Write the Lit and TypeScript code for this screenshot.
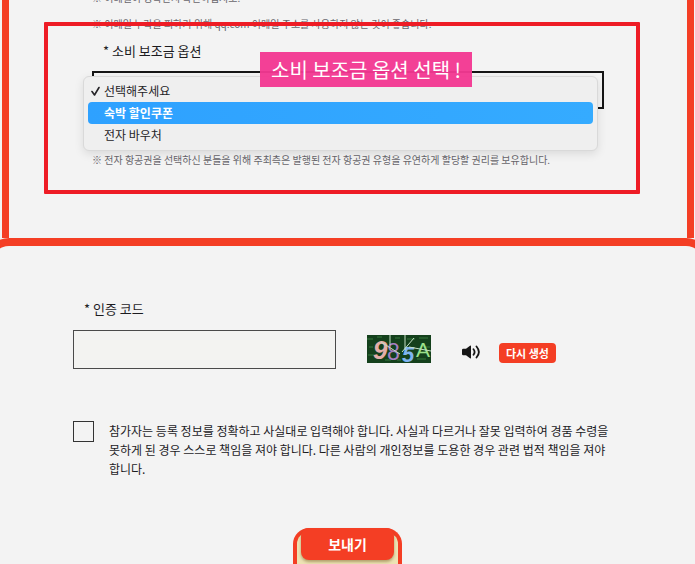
import { LitElement, html, css } from "lit";
import { customElement, state } from "lit/decorators.js";

const OPTIONS = ["선택해주세요", "숙박 할인쿠폰", "전자 바우처"];

@customElement("option-picker")
export class OptionPicker extends LitElement {
  @state() private selected = 0;
  @state() private active = 1;

  static styles = css`
    :host {
      display: block;
      position: relative;
    }
    .field {
      display: block;
      width: 100%;
      height: 38px;
      padding: 0 12px;
      border: 2px solid #151515;
      border-radius: 0;
      background: #f3f3f3;
      appearance: none;
      color: transparent;
      font: inherit;
      outline: none;
    }
    .popup {
      position: absolute;
      top: 5px;
      left: -9px;
      right: 6px;
      box-sizing: border-box;
      padding: 3px 4px 4px;
      border: 1px solid #d9d9d9;
      border-radius: 6px;
      background: #efefef;
      box-shadow: 0 3px 10px rgba(0, 0, 0, 0.1);
    }
    .option {
      display: flex;
      align-items: center;
      width: 100%;
      height: 22px;
      padding: 0 2px 2px;
      border: 0;
      border-radius: 4px;
      background: none;
      color: #252327;
      font: inherit;
      font-size: 12px;
      text-align: left;
    }
    .mark {
      flex: none;
      width: 14px;
      height: 12px;
    }
    .active {
      background: linear-gradient(90deg, #2ea1ff, #35abff);
      color: #fff;
      font-weight: 700;
    }
  `;

  render() {
    return html`
      <select class="field" id="subsidy" aria-label="소비 보조금 옵션">
        ${OPTIONS.map(
          (o, i) => html`<option ?selected=${i === this.selected}>${o}</option>`
        )}
      </select>
      <div class="popup" role="listbox" aria-label="소비 보조금 옵션">
        ${OPTIONS.map(
          (o, i) => html`
            <button
              type="button"
              role="option"
              aria-selected=${i === this.selected}
              class="option ${i === this.active ? "active" : ""}"
              @mouseenter=${() => (this.active = i)}
              @click=${() => (this.selected = i)}
            >
              <svg class="mark" viewBox="0 0 14 12" aria-hidden="true">
                ${i === this.selected
                  ? html`<svg>
                      <path
                        d="M2 7.5 L4.5 11 L9 3.5"
                        fill="none"
                        stroke="#252327"
                        stroke-width="1.6"
                        stroke-linecap="round"
                        stroke-linejoin="round"
                      />
                    </svg>`
                  : ""}
              </svg>
              ${o}
            </button>
          `
        )}
      </div>
    `;
  }
}

@customElement("app-root")
export class AppRoot extends LitElement {
  static styles = css`
    :host {
      display: block;
      min-height: 100vh;
      overflow: hidden;
      background: #f3f3f3;
      color: #1c1b1f;
      font-family: "Noto Sans CJK KR", "Noto Sans", sans-serif;
      font-size: 13px;
    }
    * {
      box-sizing: border-box;
    }
    p {
      margin: 0;
    }
    .card-top {
      margin: -15px 1px 0 2px;
      padding: 0 83px 65px;
      border: solid #f43e24;
      border-width: 0 7px;
    }
    .note {
      color: #68666c;
      font-size: 10px;
      line-height: 26px;
      white-space: nowrap;
    }
    .subsidy {
      position: relative;
      padding-top: 4px;
    }
    .label {
      display: block;
      padding-left: 11px;
      line-height: 20px;
    }
    .picker {
      margin: 10px 0 38px;
    }
    .outline {
      position: absolute;
      inset: -15px -36px -21px -48px;
      border: 4px solid #ee1c25;
      border-radius: 1px;
      pointer-events: none;
    }
    .tag {
      position: absolute;
      top: 15px;
      left: 168px;
      width: 212px;
      height: 35px;
      background: rgba(242, 56, 146, 0.96);
      color: #fff;
      font-size: 20px;
      line-height: 35px;
      text-align: center;
      white-space: nowrap;
    }
    .card-bottom {
      margin: 0 -16px;
      padding: 53px 81px 0;
      border: 8px solid #f43e24;
      border-bottom: 0;
      border-radius: 25px 25px 0 0;
      background: #f3f3f3;
    }
    .code-row {
      display: flex;
      align-items: center;
      margin-top: 11px;
    }
    .code {
      width: 263px;
      height: 39px;
      padding: 0 10px;
      border: 1px solid #4a4a4a;
      border-radius: 0;
      background: #f3f3f1;
      font: inherit;
      outline: none;
    }
    .captcha {
      flex: none;
      width: 64px;
      height: 28px;
      margin: 0 0 2px 31px;
    }
    .sound {
      flex: none;
      width: 20px;
      height: 16px;
      margin: 4px 0 0 31px;
      padding: 0;
      border: 0;
      background: none;
    }
    .sound svg {
      display: block;
    }
    .renew {
      flex: none;
      width: 57px;
      height: 20px;
      margin: 6px 0 0 17px;
      padding: 0;
      border: 0;
      border-radius: 4px;
      background: #f43e24;
      color: #fff;
      font: inherit;
      font-size: 11px;
      font-weight: 700;
      line-height: 20px;
    }
    .agree {
      display: flex;
      gap: 15px;
      margin-top: 52px;
      padding-right: 12px;
      font-size: 12px;
      line-height: 19px;
    }
    .tick {
      flex: none;
      width: 21px;
      height: 21px;
      margin: 0;
      border: 1px solid #333;
      background: #f3f3f3;
      appearance: none;
    }
    .send-frame {
      width: 109px;
      height: 60px;
      margin: 50px auto 0;
      border: 4px solid #f43e24;
      border-bottom: 0;
      border-radius: 16px 16px 0 0;
      background: #ede3b4;
    }
    .send {
      display: block;
      width: 93px;
      height: 32px;
      margin: -4px auto 0;
      padding: 0;
      border: 0;
      border-radius: 8px;
      background: #f43e24;
      box-shadow: 0 2px 3px rgba(90, 60, 0, 0.4);
      color: #fff;
      font: inherit;
      font-size: 14px;
      font-weight: 700;
      line-height: 32px;
    }
  `;

  render() {
    return html`
      <section class="card-top">
        <p class="note">※ 이메일이 정확한지 확인하십시오.</p>
        <p class="note">
          ※ 이메일 누락을 피하기 위해 qq.com 이메일 주소를 사용하지 않는 것이
          좋습니다.
        </p>
        <div class="subsidy">
          <span class="label">* 소비 보조금 옵션</span>
          <option-picker class="picker"></option-picker>
          <p class="note">
            ※ 전자 항공권을 선택하신 분들을 위해 주최측은 발행된 전자 항공권
            유형을 유연하게 할당할 권리를 보유합니다.
          </p>
          <div class="outline"></div>
          <div class="tag">소비 보조금 옵션 선택 !</div>
        </div>
      </section>

      <section class="card-bottom">
        <label class="label" for="code">* 인증 코드</label>
        <div class="code-row">
          <input class="code" id="code" type="text" />
          <svg class="captcha" viewBox="0 0 64 28" role="img" aria-label="captcha">
            <rect width="64" height="28" fill="#14401c" />
            <path
              d="M0 4h6M10 2h5M2 12h4M1 20h6M18 25h6M28 3h5M40 4h8M52 3h9M58 12h5M50 24h9M30 25h4"
              stroke="#255c2c"
              stroke-width="2"
            />
            <g font-family="Liberation Sans, sans-serif">
              <text x="6" y="24" font-size="26" font-weight="700" font-style="italic" fill="#e3aea9">9</text>
              <text x="20" y="25" font-size="23" fill="#a77fc0">8</text>
              <text x="35" y="27" font-size="22" font-weight="700" font-style="italic" fill="#7fb4f0">5</text>
              <text x="49" y="22" font-size="21" fill="#9be08a">A</text>
            </g>
            <path
              d="M23 0v10M38 0v15M14 7l19 12M35 17L47 3M42 12l22 4"
              fill="none"
              stroke="#c3dfc4"
              stroke-width="1"
            />
          </svg>
          <button class="sound" type="button" aria-label="음성 듣기">
            <svg width="20" height="16" viewBox="0 0 20 16">
              <path d="M0 6q0-1.200 1.200-1.200H4L8 1.700q1-.6 1 .6v11.400q0 1.200-1 .6L4 11.200H1.200Q0 11.200 0 10z" fill="#161616" />
              <path
                d="M11.500 5.300q2.200 2.700 0 5.400M14.500 2.500q4.800 5.500 0 11"
                fill="none"
                stroke="#161616"
                stroke-width="1.8"
                stroke-linecap="round"
              />
            </svg>
          </button>
          <button class="renew" type="button">다시 생성</button>
        </div>
        <div class="agree">
          <input class="tick" id="agree" type="checkbox" />
          <label for="agree">
            참가자는 등록 정보를 정확하고 사실대로 입력해야 합니다. 사실과
            다르거나 잘못 입력하여 경품 수령을 못하게 된 경우 스스로 책임을 져야
            합니다. 다른 사람의 개인정보를 도용한 경우 관련 법적 책임을 져야
            합니다.
          </label>
        </div>
        <div class="send-frame">
          <button class="send" type="button">보내기</button>
        </div>
      </section>
    `;
  }
}
